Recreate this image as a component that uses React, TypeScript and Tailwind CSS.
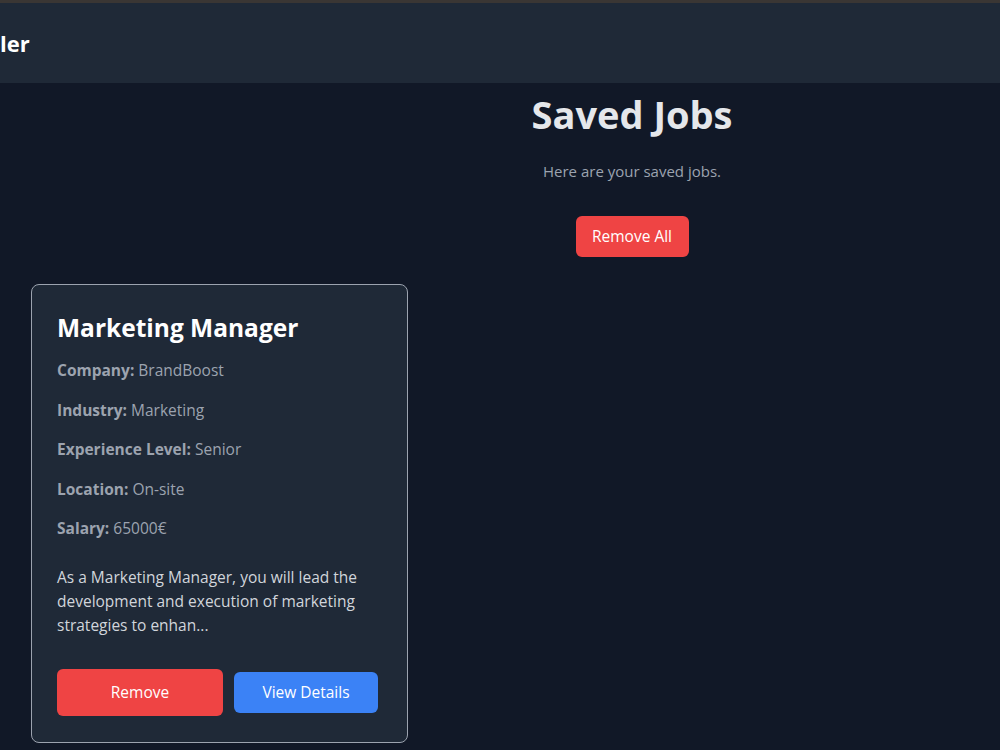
import React from 'react';

interface Job {
  title: string;
  company: string;
  industry: string;
  experience: string;
  location: string;
  salary: string;
  description: string;
}

const jobs: Job[] = [
  {
    title: 'Marketing Manager',
    company: 'BrandBoost',
    industry: 'Marketing',
    experience: 'Senior',
    location: 'On-site',
    salary: '65000€',
    description:
      'As a Marketing Manager, you will lead the development and execution of marketing strategies to enhan...',
  },
];

const Field: React.FC<{ label: string; value: string }> = ({ label, value }) => (
  <p className="mb-[15.5px] text-[15.5px] leading-6 text-[#9ca3af]">
    <span className="font-bold">{label}:</span> {value}
  </p>
);

const JobCard: React.FC<{ job: Job }> = ({ job }) => (
  <div className="w-[377px] rounded-lg border border-[#9ca3af] bg-[#1f2937] px-[25px] pt-[25px] pb-[26px]">
    <h2 className="mb-[12px] text-[24.5px] leading-9 font-bold text-white">{job.title}</h2>
    <Field label="Company" value={job.company} />
    <Field label="Industry" value={job.industry} />
    <Field label="Experience Level" value={job.experience} />
    <Field label="Location" value={job.location} />
    <Field label="Salary" value={job.salary} />
    <p className="mt-[25px] text-[15.5px] leading-6 text-[#d1d5db]">{job.description}</p>
    <div className="mt-8 flex items-center gap-[11px]">
      <button className="h-[47px] w-[166px] rounded-md bg-[#ef4444] text-[15.5px] text-white">Remove</button>
      <button className="h-[41px] w-[144px] rounded-md bg-[#3b82f6] text-[15.5px] text-white">View Details</button>
    </div>
  </div>
);

export default function App(): JSX.Element {
  return (
    <div
      className="min-h-screen bg-[#111827]"
      style={{ fontFamily: '"Open Sans", "Noto Sans", sans-serif' }}
    >
      <div className="h-[3px] bg-[#3a3634]" />
      <header className="flex h-20 items-center overflow-hidden bg-[#1f2937]">
        <span className="text-[22px] font-bold text-white">ler</span>
      </header>

      <main className="pb-2">
        <div className="flex flex-col items-center pl-[264px] pt-[10px]">
          <h1 className="text-[38px] leading-[42px] font-bold text-[#e5e7eb]">Saved Jobs</h1>
          <p className="mt-[24px] text-[15px] leading-6 text-[#9ca3af]">Here are your saved jobs.</p>
          <button className="mt-[33px] h-[41px] w-[113px] rounded-md bg-[#ef4444] text-[15.5px] text-white">
            Remove All
          </button>
        </div>

        <div className="mt-[27px] flex flex-wrap gap-6 pl-[31px]">
          {jobs.map((job) => (
            <JobCard key={job.title} job={job} />
          ))}
        </div>
      </main>
    </div>
  );
}
